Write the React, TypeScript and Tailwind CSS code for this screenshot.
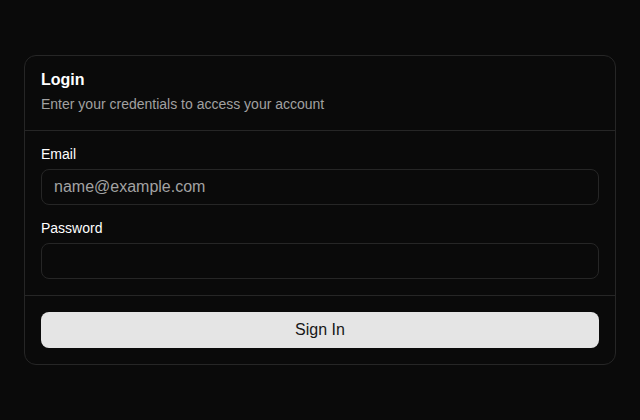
function Field({ label, type, placeholder }: { label: string; type: string; placeholder?: string }) {
  return (
    <div className="flex flex-col gap-2">
      <label className="text-sm leading-none text-white">{label}</label>
      <input
        type={type}
        placeholder={placeholder}
        className="h-9 w-full rounded-lg border border-[#262626] bg-transparent px-3 text-base text-white placeholder:text-[#a3a3a3] outline-none"
      />
    </div>
  )
}

export default function App() {
  return (
    <div
      className="flex h-[420px] w-[640px] items-center bg-[#0a0a0a] px-6"
      style={{ fontFamily: '"Liberation Sans", Arial, sans-serif' }}
    >
      <div className="w-full rounded-xl border border-[#262626] bg-[#0a0a0a]">
        <div className="border-b border-[#262626] p-4">
          <h1 className="text-base font-bold leading-none text-white">Login</h1>
          <p className="mt-1.5 text-sm leading-5 text-[#a1a1a1]">Enter your credentials to access your account</p>
        </div>
        <div className="flex flex-col gap-4 border-b border-[#262626] p-4">
          <Field label="Email" type="email" placeholder="name@example.com" />
          <Field label="Password" type="password" />
        </div>
        <div className="p-4">
          <button className="h-9 w-full rounded-lg bg-[#e5e5e5] text-base text-[#171717]">Sign In</button>
        </div>
      </div>
    </div>
  )
}
